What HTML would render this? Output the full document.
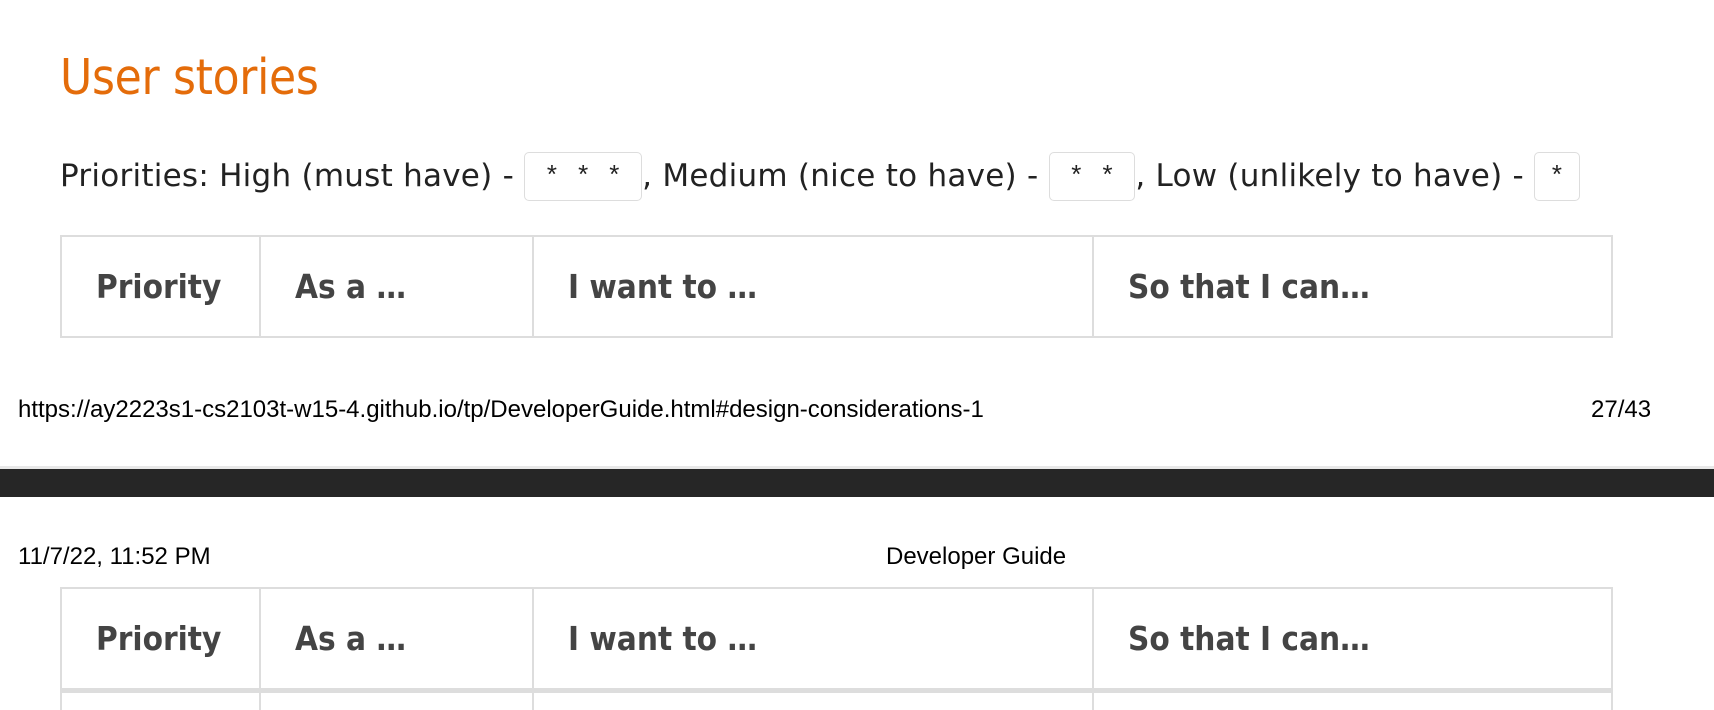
<!DOCTYPE html>
<html style="overflow:hidden"><head><style>
html,body{margin:0;width:1714px;height:710px;overflow:hidden}
body{background:#fff;position:relative;font-family:"Liberation Sans",sans-serif}
.a{position:absolute}
h2{position:absolute;left:60px;top:49px;margin:0;font-weight:normal;color:#e46c0a;font-size:49px;font-family:"DejaVu Sans Condensed","Liberation Sans",sans-serif;letter-spacing:-0.3px}
.p{left:60px;top:152px;font-size:31px;color:#222;font-family:"DejaVu Sans","Liberation Sans",sans-serif;white-space:nowrap;letter-spacing:0.25px}
code{display:inline-block;border:1px solid #ddd;border-radius:5px;padding:0 19px;font-family:"Liberation Mono",monospace;font-size:26px;vertical-align:2px;height:49px;line-height:49px;box-sizing:border-box;letter-spacing:0}
table{position:absolute;left:60px;border-collapse:collapse;width:1553px;table-layout:fixed}
td{border:2px solid #ddd;height:99px;padding:0 0 0 34px;font-weight:bold;font-size:33px;color:#444;font-family:"DejaVu Sans Condensed","Liberation Sans",sans-serif;overflow:hidden}
.s{font-size:24px;color:#000;white-space:nowrap}
</style></head><body>
<h2>User stories</h2>
<div class="a p">Priorities: High (must have) - <code>* * *</code>, Medium (nice to have) - <code>* *</code>, Low (unlikely to have) - <code style="padding:0 14px">*</code></div>
<table style="top:235px"><colgroup><col style="width:199px"><col style="width:273px"><col style="width:560px"><col></colgroup><tr><td>Priority</td><td>As a …</td><td>I want to …</td><td>So that I can…</td></tr></table>
<div class="a s" style="left:18px;top:396px">https://ay2223s1-cs2103t-w15-4.github.io/tp/DeveloperGuide.html#design-considerations-1</div>
<div class="a s" style="left:1591px;top:396px">27/43</div>
<div class="a" style="left:0;top:466px;width:1714px;height:3px;background:#e8e8e8"></div>
<div class="a" style="left:0;top:469px;width:1714px;height:28px;background:#262626"></div>
<div class="a s" style="left:18px;top:543px">11/7/22, 11:52 PM</div>
<div class="a s" style="left:886px;top:543px">Developer Guide</div>
<table style="top:587px"><colgroup><col style="width:199px"><col style="width:273px"><col style="width:560px"><col></colgroup><tr><td style="border-bottom:5px solid #ddd">Priority</td><td style="border-bottom:5px solid #ddd">As a …</td><td style="border-bottom:5px solid #ddd">I want to …</td><td style="border-bottom:5px solid #ddd">So that I can…</td></tr><tr><td style="height:20px"></td><td style="height:20px"></td><td style="height:20px"></td><td style="height:20px"></td></tr></table>
</body></html>
